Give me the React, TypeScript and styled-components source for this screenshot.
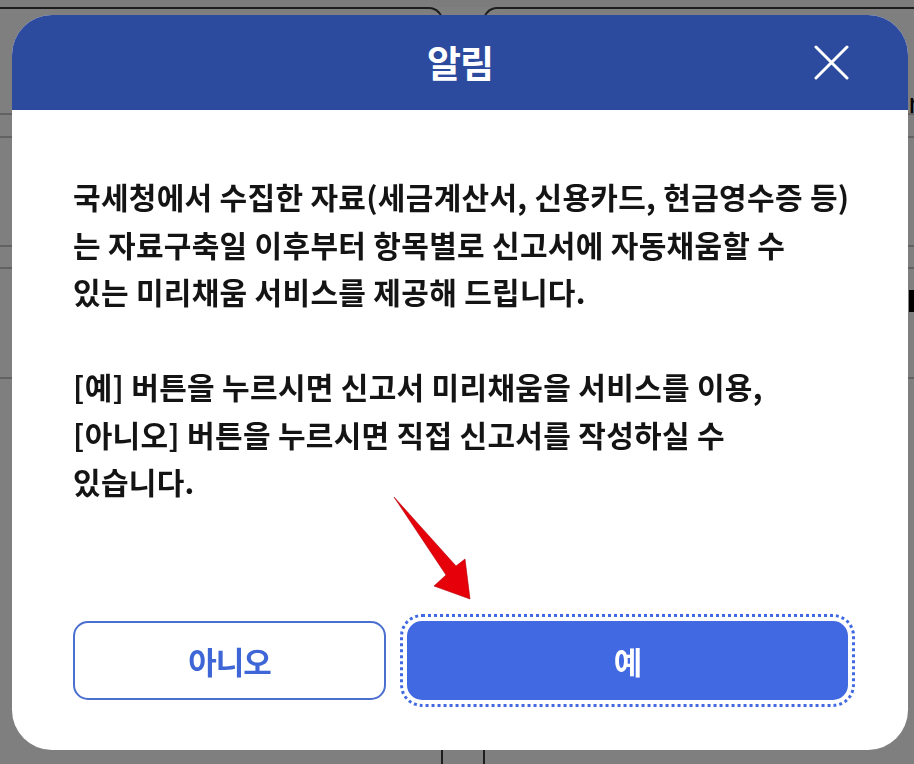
import React from "react";
import styled, { createGlobalStyle } from "styled-components";

const GlobalStyle = createGlobalStyle`
  html, body {
    margin: 0;
    padding: 0;
    background: #ffffff;
  }
  body {
    font-family: "Noto Sans CJK KR", "Noto Sans", sans-serif;
  }
`;

const Page = styled.div`
  position: relative;
  width: 914px;
  height: 764px;
  overflow: hidden;
  background: #ffffff;
`;

const TopStrip = styled.div`
  height: 7px;
  background: #f8f8f8;
`;

const CardRow = styled.div`
  display: grid;
  grid-template-columns: 443px 1fr;
  column-gap: 40px;
`;

const BgCard = styled.div<{ side: "left" | "right" }>`
  height: 757px;
  border-top: 2px solid #3a3a3a;
  ${(p) =>
    p.side === "left"
      ? "border-right: 2px solid #3a3a3a; border-top-right-radius: 14px;"
      : "border-left: 2px solid #3a3a3a; border-top-left-radius: 14px;"}
  background: #ffffff;
  display: flex;
  flex-direction: column;
`;

const BgLine = styled.div<{ top: number }>`
  margin-top: ${(p) => p.top}px;
  height: 2px;
  background: #c4c4c4;
`;

const BgLetter = styled.div`
  position: absolute;
  right: -4px;
  top: 88px;
  font-family: "Liberation Sans", sans-serif;
  font-size: 28px;
  color: #000;
`;

const BgBlock = styled.div`
  position: absolute;
  right: 0;
  top: 290px;
  width: 5px;
  height: 22px;
  background: #000;
`;

const Overlay = styled.div`
  position: fixed;
  inset: 0;
  background: rgba(0, 0, 0, 0.5);
  padding: 15px 0 0 12px;
  box-sizing: border-box;
`;

const Modal = styled.div`
  width: 896px;
  height: 735px;
  background: #ffffff;
  border-radius: 40px;
  overflow: hidden;
  display: flex;
  flex-direction: column;
`;

const Header = styled.div`
  height: 95px;
  background: #2c4a9e;
  display: grid;
  grid-template-columns: 1fr auto 1fr;
  align-items: center;
`;

const Title = styled.h1`
  grid-column: 2;
  margin: 0;
  color: #ffffff;
  font-size: 37px;
  font-weight: 700;
  letter-spacing: -1px;
  line-height: 1;
`;

const CloseButton = styled.button`
  grid-column: 3;
  justify-self: end;
  margin-right: 59px;
  width: 35px;
  height: 35px;
  padding: 0;
  border: 0;
  background: transparent;
  display: flex;
  align-items: center;
  justify-content: center;
`;

const Body = styled.div`
  flex: 1;
  padding: 63px 30px 0 61px;
`;

const Paragraph = styled.p`
  margin: 0 0 47.5px;
  font-size: 30px;
  font-weight: 700;
  line-height: 47.5px;
  letter-spacing: 0.3px;
  color: #141414;
  white-space: nowrap;
`;

const Footer = styled.div`
  display: grid;
  grid-template-columns: 313px 441px;
  column-gap: 21px;
  padding: 0 0 50px 61px;
`;

const Button = styled.button<{ primary?: boolean }>`
  height: 79px;
  border-radius: 15px;
  font-family: "Noto Sans CJK KR", sans-serif;
  font-size: 31px;
  font-weight: 700;
  letter-spacing: -1px;
  cursor: pointer;
  border: 2px solid ${(p) => (p.primary ? "#4169e1" : "#4a6fcf")};
  background: ${(p) => (p.primary ? "#4169e1" : "#ffffff")};
  color: ${(p) => (p.primary ? "#ffffff" : "#3e66d6")};
  ${(p) =>
    p.primary &&
    `
    outline: 3px dotted #4169e1;
    outline-offset: 4px;
  `}
`;

const Arrow = styled.svg`
  position: absolute;
  left: 0;
  top: 0;
  width: 914px;
  height: 764px;
  pointer-events: none;
`;

export default function App() {
  return (
    <>
      <GlobalStyle />
      <Page>
        <TopStrip />
        <CardRow>
          <BgCard side="left">
            <BgLine top={104} />
            <BgLine top={21} />
            <BgLine top={107} />
            <BgLine top={20} />
            <BgLine top={108} />
          </BgCard>
          <BgCard side="right">
            <BgLine top={104} />
            <BgLine top={21} />
            <BgLine top={107} />
            <BgLine top={20} />
            <BgLine top={108} />
          </BgCard>
        </CardRow>
        <BgLetter>r</BgLetter>
        <BgBlock />
        <Overlay>
          <Modal>
            <Header>
              <Title>알림</Title>
              <CloseButton aria-label="닫기">
                <svg width="35" height="35" viewBox="0 0 35 35">
                  <path
                    d="M2 2 L33 33 M33 2 L2 33"
                    stroke="#ffffff"
                    strokeWidth="3"
                    strokeLinecap="round"
                  />
                </svg>
              </CloseButton>
            </Header>
            <Body>
              <Paragraph>
                국세청에서 수집한 자료(세금계산서, 신용카드, 현금영수증 등)
                <br />는 자료구축일 이후부터 항목별로 신고서에 자동채움할 수
                <br />있는 미리채움 서비스를 제공해 드립니다.
              </Paragraph>
              <Paragraph>
                [예] 버튼을 누르시면 신고서 미리채움을 서비스를 이용,
                <br />[아니오] 버튼을 누르시면 직접 신고서를 작성하실 수
                <br />있습니다.
              </Paragraph>
            </Body>
            <Footer>
              <Button>아니오</Button>
              <Button primary>예</Button>
            </Footer>
          </Modal>
          <Arrow viewBox="0 0 914 764">
            <polygon
              points="394,497 456,566 465,559 470,599 434,586 446,575"
              fill="#e5000a"
              stroke="#b00008"
              strokeWidth="0.6"
              strokeLinejoin="round"
            />
          </Arrow>
        </Overlay>
      </Page>
    </>
  );
}
